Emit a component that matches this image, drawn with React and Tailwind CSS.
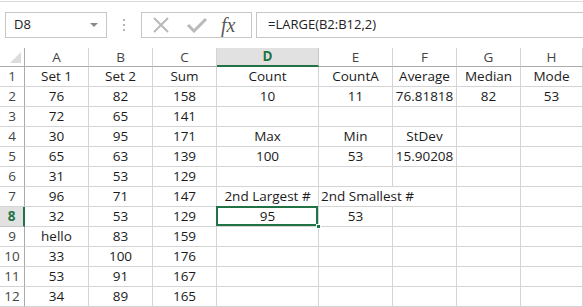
import React from 'react';

const cols = ['A', 'B', 'C', 'D', 'E', 'F', 'G', 'H'];

// each row: values for A..H, null = empty, 'SPAN' = taken by text from the left
const rows = [
  ['Set 1', 'Set 2', 'Sum', 'Count', 'CountA', 'Average', 'Median', 'Mode'],
  ['76', '82', '158', '10', '11', '76.81818', '82', '53'],
  ['72', '65', '141', null, null, null, null, null],
  ['30', '95', '171', 'Max', 'Min', 'StDev', null, null],
  ['65', '63', '139', '100', '53', '15.90208', null, null],
  ['31', '53', '129', null, null, null, null, null],
  ['96', '71', '147', '2nd Largest #', '2nd Smallest #', 'SPAN', null, null],
  ['32', '53', '129', '95', '53', null, null, null],
  ['hello', '83', '159', null, null, null, null, null],
  ['33', '100', '176', null, null, null, null, null],
  ['53', '91', '167', null, null, null, null, null],
  ['34', '89', '165', null, null, null, null, null],
];

const gridCols = 'grid-cols-[25px_64px_64px_64px_102px_74px_64px_64px_1fr]';

const Cell = ({ children, className = '' }) => (
  <div className={`h-[20px] border-r border-b border-[#d4d4d4] flex items-center justify-center text-[#1b1b1b] overflow-visible whitespace-nowrap ${className}`}>
    {children}
  </div>
);

const FormulaBar = () => (
  <div className="h-[47px] border-t border-[#dadada] mt-[1px] bg-white flex items-start pt-[10px] gap-[4px]">
    <div className="ml-[5px] w-[102px] h-[26px] border border-[#c6c6c6] flex items-center justify-between pl-[8px] pr-[6px] text-[13px] text-[#222]">
      <span>D8</span>
      <span className="w-0 h-0 border-l-[4px] border-r-[4px] border-t-[4px] border-l-transparent border-r-transparent border-t-[#8a8a8a] mr-[2px]"></span>
    </div>
    <div className="w-[26px] h-[26px] flex flex-col items-center justify-center gap-[3px]">
      <span className="w-[2px] h-[2px] bg-[#b5b5b5]"></span>
      <span className="w-[2px] h-[2px] bg-[#b5b5b5]"></span>
      <span className="w-[2px] h-[2px] bg-[#b5b5b5]"></span>
    </div>
    <div className="w-[111px] h-[26px] border border-[#c6c6c6] flex items-center">
      <svg width="20" height="16" viewBox="0 0 20 16" className="ml-[9px]">
        <path d="M3 1 L17 15 M17 1 L3 15" stroke="#b9b9b9" strokeWidth="2" fill="none" />
      </svg>
      <svg width="22" height="16" viewBox="0 0 22 16" className="ml-[15px]">
        <path d="M2 8 L8 14 L20 2" stroke="#b9b9b9" strokeWidth="3" fill="none" />
      </svg>
      <span className="ml-[13px] text-[20px] italic text-[#5a5a5a] leading-none" style={{ fontFamily: '"Liberation Serif", serif' }}>
        fx
      </span>
    </div>
    <div className="flex-1 h-[26px] border-t border-b border-l border-[#c6c6c6] flex items-center pl-[11px] text-[13px] text-[#222]">
      =LARGE(B2:B12,2)
    </div>
  </div>
);

export default function App() {
  return (
    <div className="w-[583px] h-[307px] overflow-hidden bg-white" style={{ fontFamily: '"Open Sans", sans-serif' }}>
      <FormulaBar />
      <div className={`grid ${gridCols} text-[13.5px]`}>
        {/* header row */}
        <div className="h-[19px] border-r border-b border-[#ababab] flex items-end justify-end pr-[3px] pb-[3px]">
          <svg width="11" height="11" viewBox="0 0 11 11">
            <path d="M11 0 L11 11 L0 11 Z" fill="#dcdcdc" />
          </svg>
        </div>
        {cols.map((c) =>
          c === 'D' ? (
            <div key={c} className="h-[19px] bg-[#e1e1e1] border-r border-[#c6c6c6] border-b-2 border-b-[#217346] flex items-center justify-center font-bold text-[#217346]">
              {c}
            </div>
          ) : (
            <div key={c} className="h-[19px] border-r border-[#d4d4d4] border-b border-b-[#ababab] flex items-center justify-center text-[#444]">
              {c}
            </div>
          )
        )}

        {rows.map((r, i) => {
          const n = i + 1;
          const sel = n === 8;
          const cells = [];
          r.forEach((v, j) => {
            if (v === 'SPAN') return;
            const spans = j + 1 < r.length && r[j + 1] === 'SPAN';
            if (spans) {
              cells.push(
                <Cell key={j} className="col-span-2 !justify-start pl-[2px]">{v}</Cell>
              );
            } else if (sel && j === 3) {
              cells.push(
                <Cell key={j} className="relative">
                  {v}
                  <div className="absolute -left-[1px] -top-[1px] right-0 bottom-0 border-2 border-[#217346]"></div>
                  <div className="absolute -right-[3px] -bottom-[3px] w-[5px] h-[5px] bg-[#217346] border border-white"></div>
                </Cell>
              );
            } else {
              cells.push(<Cell key={j}>{v}</Cell>);
            }
          });
          return (
            <React.Fragment key={n}>
              {sel ? (
                <div className="h-[20px] bg-[#e1e1e1] border-b border-[#c6c6c6] border-r-2 border-r-[#217346] flex items-center justify-center font-bold text-[#217346]">
                  {n}
                </div>
              ) : (
                <div className="h-[20px] border-b border-[#d4d4d4] border-r border-r-[#ababab] flex items-center justify-center text-[#444]">
                  {n}
                </div>
              )}
              {cells}
            </React.Fragment>
          );
        })}
      </div>
    </div>
  );
}
